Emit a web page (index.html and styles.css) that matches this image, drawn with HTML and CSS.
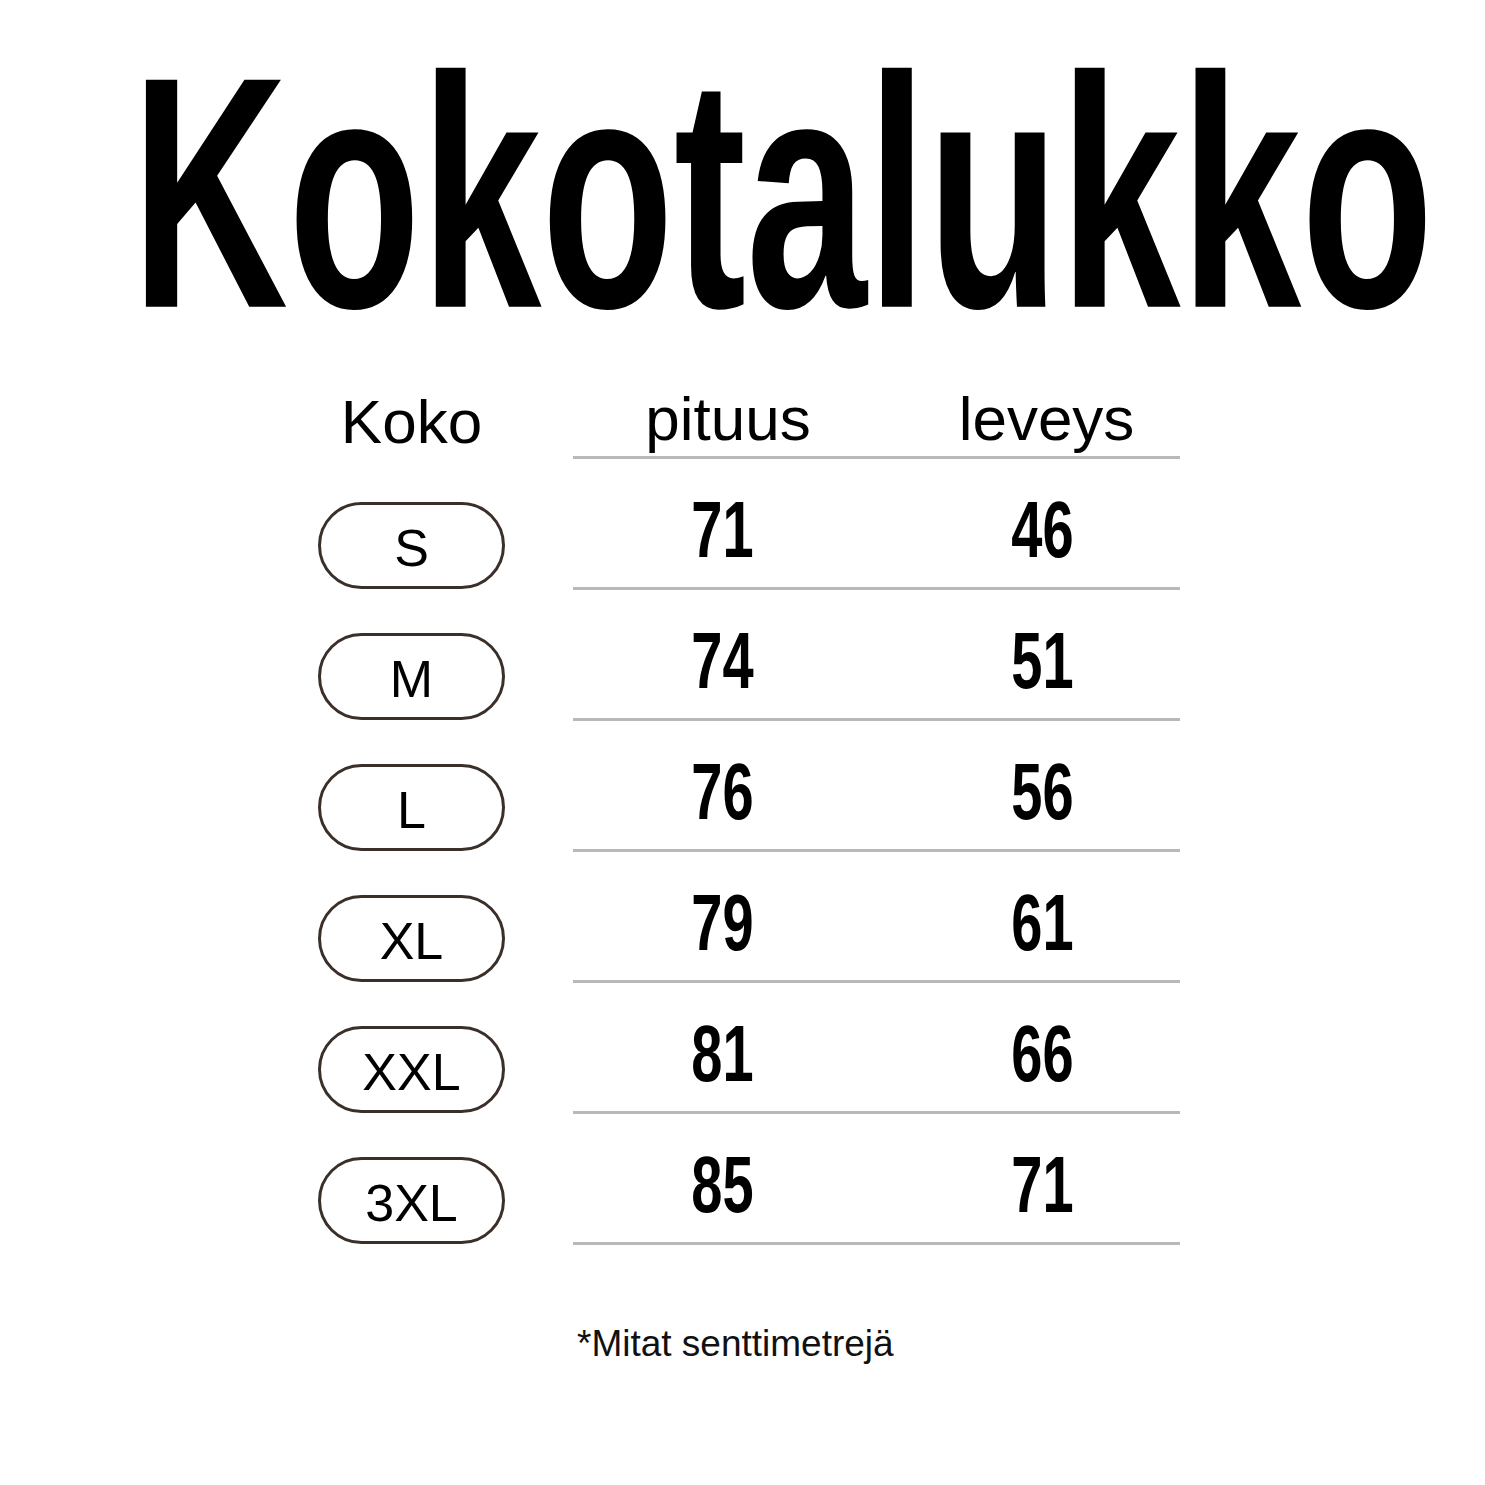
FILE: index.html
```html
<!DOCTYPE html>
<html lang="fi">
<head>
<meta charset="utf-8">
<title>Kokotalukko</title>
<link rel="stylesheet" href="styles.css">
</head>
<body>
<div class="page">
  <div class="title-wrap">
    <h1 class="title">Kokotalukko</h1>
  </div>

  <div class="table">
    <div class="hcell size-head">Koko</div>
    <div class="spacer"></div>
    <div class="hcell col-a">pituus</div>
    <div class="hcell col-b">leveys</div>

    <div class="size"><span class="pill">S</span></div>
    <div class="spacer"></div>
    <div class="cell col-a"><span class="num">71</span></div>
    <div class="cell col-b"><span class="num">46</span></div>

    <div class="size"><span class="pill">M</span></div>
    <div class="spacer"></div>
    <div class="cell col-a"><span class="num">74</span></div>
    <div class="cell col-b"><span class="num">51</span></div>

    <div class="size"><span class="pill">L</span></div>
    <div class="spacer"></div>
    <div class="cell col-a"><span class="num">76</span></div>
    <div class="cell col-b"><span class="num">56</span></div>

    <div class="size"><span class="pill">XL</span></div>
    <div class="spacer"></div>
    <div class="cell col-a"><span class="num">79</span></div>
    <div class="cell col-b"><span class="num">61</span></div>

    <div class="size"><span class="pill">XXL</span></div>
    <div class="spacer"></div>
    <div class="cell col-a"><span class="num">81</span></div>
    <div class="cell col-b"><span class="num">66</span></div>

    <div class="size"><span class="pill">3XL</span></div>
    <div class="spacer"></div>
    <div class="cell col-a"><span class="num">85</span></div>
    <div class="cell col-b"><span class="num">71</span></div>
  </div>

  <p class="note">*Mitat senttimetrejä</p>
</div>
</body>
</html>
```

FILE: styles.css
```css
html, body {
  margin: 0;
  padding: 0;
  background: #ffffff;
}

.page {
  width: 1485px;
  height: 1485px;
  font-family: "Liberation Sans", Arial, sans-serif;
  color: #000;
  overflow: hidden;
}

.title-wrap {
  display: flex;
  justify-content: center;
  padding-left: 80px;
  padding-top: 85px;
  height: 217px;
}

.title {
  margin: 0;
  flex: none;
  font-family: "Liberation Sans", Arial, sans-serif;
  font-weight: 700;
  font-size: 217px;
  line-height: 217px;
  white-space: nowrap;
  transform: scaleY(1.52);
  transform-origin: center;
}

.table {
  width: 862px;
  margin-top: 57px;
  margin-left: 318px;
  display: grid;
  grid-template-columns: 187px 68px 310px 297px;
  grid-template-rows: 100px repeat(6, 131px);
}

.hcell {
  display: flex;
  align-items: flex-end;
  justify-content: center;
  font-size: 62px;
  line-height: 70px;
  padding-bottom: 2px;
  box-sizing: border-box;
}

.col-a, .col-b {
  border-bottom: 3px solid #b9b9b9;
  box-sizing: border-box;
}

.cell.col-a {
  padding-right: 12px;
}

.col-b {
  padding-left: 22px;
}

.hcell.col-b {
  padding-left: 30px;
}

.size {
  display: flex;
  align-items: flex-end;
  justify-content: center;
  padding-bottom: 1px;
  box-sizing: border-box;
}

.pill {
  width: 187px;
  height: 87px;
  box-sizing: border-box;
  border: 3px solid #3b2f29;
  border-radius: 44px;
  display: flex;
  align-items: center;
  justify-content: center;
  font-size: 52px;
  line-height: 1;
  padding-top: 4px;
}

.cell {
  display: flex;
  align-items: center;
  justify-content: center;
  padding-top: 14px;
}

.num {
  display: inline-block;
  font-weight: 700;
  font-size: 80px;
  line-height: 80px;
  transform: scaleX(0.7);
}

.note {
  margin: 77px 0 0 577px;
  font-size: 37px;
  line-height: 44px;
  color: #111;
}
```
